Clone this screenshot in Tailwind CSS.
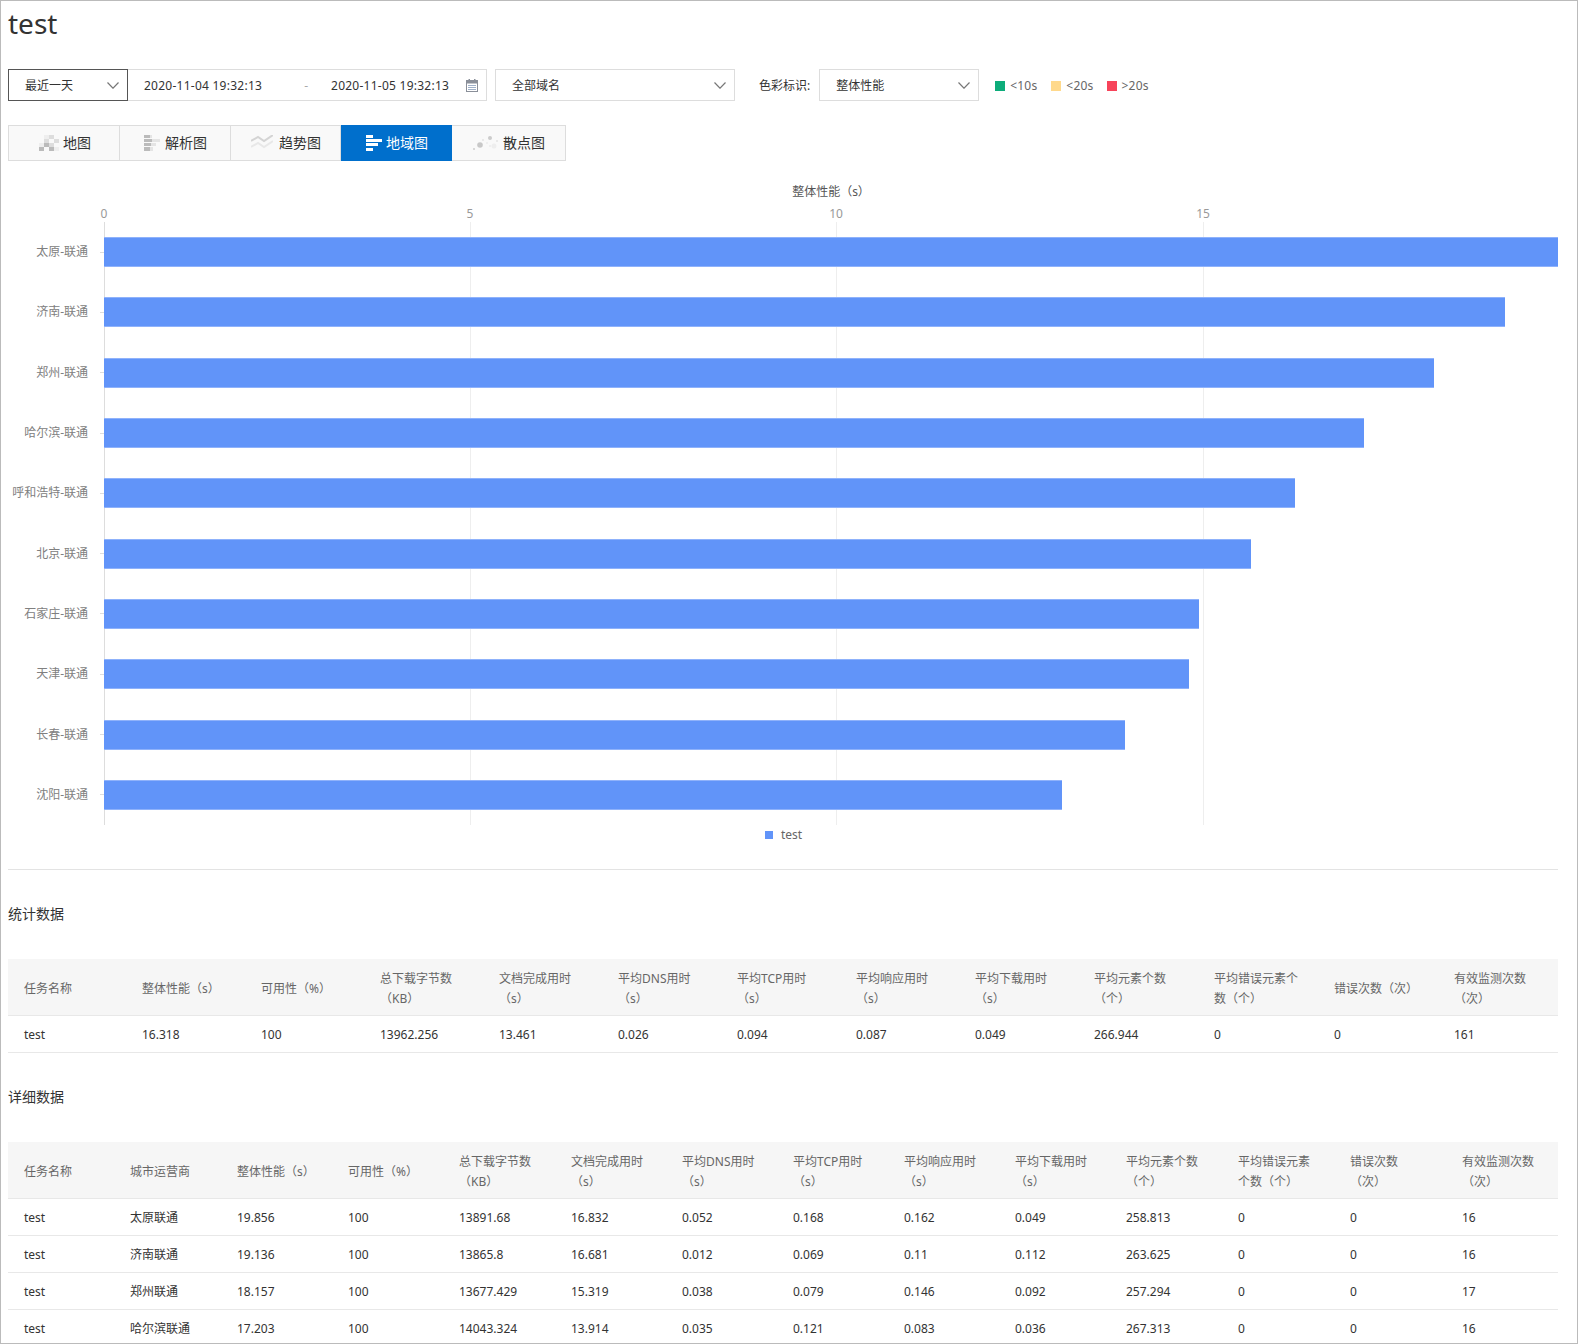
<!DOCTYPE html>
<html lang="zh">
<head>
  <meta charset="UTF-8" />
  <title>test</title>
  <script src="https://cdn.jsdelivr.net/npm/@tailwindcss/browser@4"></script>
</head>
<body class="bg-white font-['Noto_Sans','Noto_Sans_CJK_SC',sans-serif] text-[#333] text-xs">
<div class="h-[1344px] overflow-hidden border border-[#bbb] pl-[7px] pr-[19px]">

  <h1 class="text-[28px] leading-[38px] h-[38px] mt-[3px]">test</h1>

  <!-- 筛选栏 -->
  <div class="flex items-center mt-[27px] h-8">
    <div class="w-[120px] h-8 border border-[#555] flex items-center justify-between pl-4 pr-2 pt-[2px]">
      <span>最近一天</span>
      <svg class="-mt-[2px]" width="12" height="7" viewBox="0 0 12 7" fill="none" stroke="#777" stroke-width="1.2"><path d="M.5.5 6 6.2 11.5.5"/></svg>
    </div>
    <div class="w-[359px] h-8 border border-l-0 border-[#ddd] flex items-center">
      <span class="ml-4 pt-[2px] tracking-[.25px]">2020-11-04 19:32:13</span>
      <span class="ml-[42px] pt-[2px] text-[#aaa]">-</span>
      <span class="ml-[23px] pt-[2px] tracking-[.25px]">2020-11-05 19:32:13</span>
      <svg class="ml-[17px]" width="12" height="13" viewBox="0 0 12 13" fill="none"><rect x=".5" y="1.5" width="11" height="11" stroke="#8a8f99"/><path fill="#8a8f99" d="M0 2h12v2.5H0zM2.5 0h1.500v2h-1.500zM8 0h1.500v2H8z"/><path stroke="#9fb0c8" d="M2 6.500h8M2 8.500h8M2 10.500h8"/></svg>
    </div>
    <div class="w-[240px] h-8 border border-[#ddd] ml-[8px] flex items-center justify-between pl-4 pr-2 pt-[2px]">
      <span>全部域名</span>
      <svg class="-mt-[2px]" width="12" height="7" viewBox="0 0 12 7" fill="none" stroke="#777" stroke-width="1.2"><path d="M.5.5 6 6.2 11.5.5"/></svg>
    </div>
    <span class="ml-6 pt-[2px]">色彩标识:</span>
    <div class="w-[160px] h-8 border border-[#ddd] ml-[9px] flex items-center justify-between pl-4 pr-2 pt-[2px]">
      <span>整体性能</span>
      <svg class="-mt-[2px]" width="12" height="7" viewBox="0 0 12 7" fill="none" stroke="#777" stroke-width="1.2"><path d="M.5.5 6 6.2 11.5.5"/></svg>
    </div>
    <div class="flex items-center text-[#666] ml-4 pt-[1px]">
      <span class="w-2.5 h-2.5 bg-[#0dac7a]"></span><span class="ml-[5px] tracking-[.2px]">&lt;10s</span>
      <span class="w-2.5 h-2.5 bg-[#ffd98c] ml-[14px]"></span><span class="ml-[5px] tracking-[.2px]">&lt;20s</span>
      <span class="w-2.5 h-2.5 bg-[#f7435a] ml-[13px]"></span><span class="ml-[5px] tracking-[.2px]">&gt;20s</span>
    </div>
  </div>

  <!-- 图表类型 -->
  <div class="flex mt-[24px] h-9 text-sm">
    <div class="w-[112px] border border-[#ddd] bg-[#f9f9f9] flex items-center pl-[29px] gap-[4px]">
      <svg width="21" height="16" viewBox="0 0 21 16"><path fill="#ddd" d="M11 0h5v4h-5zM16 4h5v4h-5zM6 4h5v4H6zM11 8h5v4h-5z"/><path fill="#bbb" d="M6 8h5v4H6zM1 12h5v4H1zM11 12h5v4h-5z"/><path fill="#eee" d="M16 12h5v4h-5zM6 0h5v4H6zM1 8h5v4H1z"/></svg>
      <span>地图</span>
    </div>
    <div class="w-[111px] border border-l-0 border-[#ddd] bg-[#f9f9f9] flex items-center pl-6 gap-[5px]">
      <svg width="16" height="16" viewBox="0 0 16 16"><path fill="#bbb" d="M0 0h6v3H0zM0 4h8v3H0zM0 8h7v3H0zM0 12h6v4H0z"/><path fill="#e4e4e4" d="M6 0h2v3H6zM8 4h8v3H8zM7 8h5v3H7zM6 12h3v4H6z"/></svg>
      <span>解析图</span>
    </div>
    <div class="w-[110px] border border-l-0 border-[#ddd] bg-[#f9f9f9] flex items-center pl-[20px] gap-[6px]">
      <svg width="22" height="16" viewBox="0 0 22 16" fill="none" stroke-width="2"><path stroke="#d4d4d4" d="M0 6l7-4 6 4 9-6"/><path stroke="#e8e8e8" d="M0 12l7-4 6 4 9-6"/></svg>
      <span>趋势图</span>
    </div>
    <div class="w-[111px] bg-[#006fcc] text-white flex items-center pl-[25px] gap-[4px]">
      <svg width="16" height="16" viewBox="0 0 16 16" fill="#fff"><path d="M0 0h7v3H0zM0 4h16v3H0zM0 8h12v3H0zM0 13h7v3H0z"/></svg>
      <span>地域图</span>
    </div>
    <div class="w-[114px] border border-l-0 border-[#ddd] bg-[#f9f9f9] flex items-center pl-[21px] gap-[5px]">
      <svg width="25" height="16" viewBox="0 0 25 16"><circle cx="1" cy="14" r="1" fill="#ccc"/><circle cx="7" cy="10" r="2.800" fill="#c8c8c8"/><circle cx="17" cy="3" r="2" fill="#ccc"/><circle cx="21" cy="11" r="2.500" fill="#eee"/><circle cx="10" cy="5" r=".7" fill="#ccc"/><circle cx="24" cy="6" r=".7" fill="#ccc"/><circle cx="14" cy="8" r=".7" fill="#ddd"/><circle cx="17" cy="11" r=".7" fill="#ddd"/></svg>
      <span>散点图</span>
    </div>
  </div>

  <!-- 条形图 -->
  <div class="text-center text-[#555] mt-[21px] pl-[96px] leading-5">整体性能（s）</div>
  <div class="relative h-[16px] mt-[4px] text-[#999] ml-[96px]">
    <span class="absolute -translate-x-1/2 left-0">0</span>
    <span class="absolute -translate-x-1/2 left-[366px]">5</span>
    <span class="absolute -translate-x-1/2 left-[732px]">10</span>
    <span class="absolute -translate-x-1/2 left-[1099px]">15</span>
  </div>
  <div class="relative h-[603px]">
    <div class="absolute top-0 bottom-0 left-[96px] w-px bg-[#ddd]"></div>
    <div class="absolute top-0 bottom-0 left-[462px] w-px bg-[#eee]"></div>
    <div class="absolute top-0 bottom-0 left-[828px] w-px bg-[#eee]"></div>
    <div class="absolute top-0 bottom-0 left-[1195px] w-px bg-[#eee]"></div>
    <div id="bars" class="relative grid grid-rows-10 h-full"></div>
  </div>
  <div class="flex items-center ml-[757px] mt-[2px] h-[15px] text-[#666]">
    <span class="w-2 h-2 bg-[#6194f9]"></span><span class="ml-2">test</span>
  </div>

  <div class="border-t border-[#e3e3e3] mt-[27px]"></div>
  <h2 class="text-sm leading-5 mt-[34px]">统计数据</h2>

  <table class="table-fixed border-collapse w-[1550px] mt-[35px] text-left">
    <colgroup>
      <col class="w-[118px]"><col class="w-[119px]"><col class="w-[119px]"><col class="w-[119px]"><col class="w-[119px]"><col class="w-[119px]"><col class="w-[119px]"><col class="w-[119px]"><col class="w-[119px]"><col class="w-[120px]"><col class="w-[120px]"><col class="w-[120px]"><col class="w-[120px]">
    </colgroup>
    <thead>
      <tr class="h-[56px] bg-[#f6f6f6] border-b border-[#e8e8e8] text-[#666] leading-5">
        <th class="pl-4 pt-1 font-normal">任务名称</th>
        <th class="pl-4 pt-1 font-normal">整体性能（s）</th>
        <th class="pl-4 pt-1 font-normal">可用性（%）</th>
        <th class="pl-4 pt-1 font-normal">总下载字节数<br>（KB）</th>
        <th class="pl-4 pt-1 font-normal">文档完成用时<br>（s）</th>
        <th class="pl-4 pt-1 font-normal">平均DNS用时<br>（s）</th>
        <th class="pl-4 pt-1 font-normal">平均TCP用时<br>（s）</th>
        <th class="pl-4 pt-1 font-normal">平均响应用时<br>（s）</th>
        <th class="pl-4 pt-1 font-normal">平均下载用时<br>（s）</th>
        <th class="pl-4 pt-1 font-normal">平均元素个数<br>（个）</th>
        <th class="pl-4 pt-1 font-normal">平均错误元素个<br>数（个）</th>
        <th class="pl-4 pt-1 font-normal">错误次数（次）</th>
        <th class="pl-4 pt-1 font-normal">有效监测次数<br>（次）</th>
      </tr>
    </thead>
    <tbody>
      <tr class="h-[37px] border-b border-[#e8e8e8]">
        <td class="pl-4 pt-[2px]">test</td><td class="pl-4 pt-[2px]">16.318</td><td class="pl-4 pt-[2px]">100</td><td class="pl-4 pt-[2px]">13962.256</td><td class="pl-4 pt-[2px]">13.461</td><td class="pl-4 pt-[2px]">0.026</td><td class="pl-4 pt-[2px]">0.094</td><td class="pl-4 pt-[2px]">0.087</td><td class="pl-4 pt-[2px]">0.049</td><td class="pl-4 pt-[2px]">266.944</td><td class="pl-4 pt-[2px]">0</td><td class="pl-4 pt-[2px]">0</td><td class="pl-4 pt-[2px]">161</td>
      </tr>
    </tbody>
  </table>

  <h2 class="text-sm leading-5 mt-[34px]">详细数据</h2>

  <table class="table-fixed border-collapse w-[1550px] mt-[35px] text-left">
    <colgroup>
      <col class="w-[106px]"><col class="w-[107px]"><col class="w-[111px]"><col class="w-[111px]"><col class="w-[112px]"><col class="w-[111px]"><col class="w-[111px]"><col class="w-[111px]"><col class="w-[111px]"><col class="w-[111px]"><col class="w-[112px]"><col class="w-[112px]"><col class="w-[112px]"><col class="w-[112px]">
    </colgroup>
    <thead>
      <tr class="h-[57px] bg-[#f6f6f6] border-b border-[#e8e8e8] text-[#666] leading-5">
        <th class="pl-4 pt-1 font-normal">任务名称</th>
        <th class="pl-4 pt-1 font-normal">城市运营商</th>
        <th class="pl-4 pt-1 font-normal">整体性能（s）</th>
        <th class="pl-4 pt-1 font-normal">可用性（%）</th>
        <th class="pl-4 pt-1 font-normal">总下载字节数<br>（KB）</th>
        <th class="pl-4 pt-1 font-normal">文档完成用时<br>（s）</th>
        <th class="pl-4 pt-1 font-normal">平均DNS用时<br>（s）</th>
        <th class="pl-4 pt-1 font-normal">平均TCP用时<br>（s）</th>
        <th class="pl-4 pt-1 font-normal">平均响应用时<br>（s）</th>
        <th class="pl-4 pt-1 font-normal">平均下载用时<br>（s）</th>
        <th class="pl-4 pt-1 font-normal">平均元素个数<br>（个）</th>
        <th class="pl-4 pt-1 font-normal">平均错误元素<br>个数（个）</th>
        <th class="pl-4 pt-1 font-normal">错误次数<br>（次）</th>
        <th class="pl-4 pt-1 font-normal">有效监测次数<br>（次）</th>
      </tr>
    </thead>
    <tbody id="detail"></tbody>
  </table>
</div>

<script>
  // 地域图数据：城市、整体性能(s)
  const bars = [
    ['太原-联通', 19.856], ['济南-联通', 19.136], ['郑州-联通', 18.157], ['哈尔滨-联通', 17.203],
    ['呼和浩特-联通', 16.26], ['北京-联通', 15.66], ['石家庄-联通', 14.96], ['天津-联通', 14.82],
    ['长春-联通', 13.95], ['沈阳-联通', 13.08]
  ];
  document.getElementById('bars').innerHTML = bars.map(([name, v]) => `
    <div class="flex items-center">
      <div class="w-[80px] shrink-0 text-right text-[#808080]">${name}</div>
      <div class="w-[16px] shrink-0 flex justify-end"><span class="w-1 h-px bg-[#ddd]"></span></div>
      <div class="h-[30px] bg-[#6194f9] border-y border-[#8fb2fb]" style="width:${(v * 73.22).toFixed(1)}px"></div>
    </div>`).join('');

  const rows = [
    ['太原联通', '19.856', '100', '13891.68', '16.832', '0.052', '0.168', '0.162', '0.049', '258.813', '0', '0', '16'],
    ['济南联通', '19.136', '100', '13865.8', '16.681', '0.012', '0.069', '0.11', '0.112', '263.625', '0', '0', '16'],
    ['郑州联通', '18.157', '100', '13677.429', '15.319', '0.038', '0.079', '0.146', '0.092', '257.294', '0', '0', '17'],
    ['哈尔滨联通', '17.203', '100', '14043.324', '13.914', '0.035', '0.121', '0.083', '0.036', '267.313', '0', '0', '16']
  ];
  document.getElementById('detail').innerHTML = rows.map(r =>
    `<tr class="h-[37px] border-b border-[#e8e8e8]"><td class="pl-4 pt-[2px]">test</td>${r.map(c => `<td class="pl-4 pt-[2px]">${c}</td>`).join('')}</tr>`
  ).join('');
</script>
</body>
</html>
